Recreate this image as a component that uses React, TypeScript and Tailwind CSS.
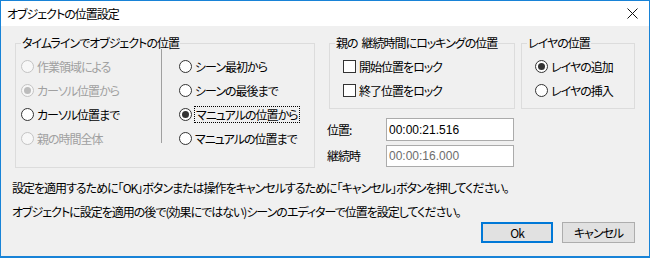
import React from 'react';

const font = "font-['Noto_Sans_CJK_JP','Noto_Sans',sans-serif] [font-feature-settings:'palt'] tracking-[-1px]";

type RadioProps = { label: string; checked?: boolean; disabled?: boolean; focused?: boolean };

const Radio: React.FC<RadioProps> = ({ label, checked, disabled, focused }) => (
  <div className="flex items-center h-6">
    <span
      className={
        'w-[13px] h-[13px] rounded-full border flex items-center justify-center shrink-0 ' +
        (disabled ? 'border-[#c4c4c4] bg-[#f7f7f7]' : 'border-[#333333] bg-white')
      }
    >
      {checked && (
        <span className={'w-[7px] h-[7px] rounded-full ' + (disabled ? 'bg-[#bcbcbc]' : 'bg-[#333333]')} />
      )}
    </span>
    <span
      className={
        'ml-[2px] leading-[15px] ' +
        (disabled ? 'text-[#a0a0a0] ' : 'text-black ') +
        (focused ? 'border border-dotted border-black px-[1px]' : 'border border-transparent')
      }
    >
      {label}
    </span>
  </div>
);

const Check: React.FC<{ label: string }> = ({ label }) => (
  <div className="flex items-center h-6">
    <span className="w-[13px] h-[13px] border border-[#333333] bg-white shrink-0" />
    <span className="ml-[3px] leading-[15px]">{label}</span>
  </div>
);

const Group: React.FC<{ title: React.ReactNode; className?: string; children: React.ReactNode }> = ({
  title,
  className,
  children,
}) => (
  <fieldset className={'border border-[#dcdcdc] p-0 m-0 ' + (className ?? '')}>
    <legend className="ml-[5px] px-[1px] leading-[16px] text-black">{title}</legend>
    {children}
  </fieldset>
);

export default function App() {
  return (
    <div className={`w-[650px] h-[258px] flex flex-col border border-[#1883d7] border-b-2 text-[12px] text-black ${font}`}>
      {/* Title bar */}
      <div className="h-[25px] bg-white flex items-center justify-between pl-[6px] pr-[11px] shrink-0">
        <span className="text-[12px] leading-[16px]">オブジェクトの位置設定</span>
        <svg width="11" height="11" viewBox="0 0 11 11">
          <path d="M0.5 0.5 L10.5 10.5 M10.5 0.5 L0.5 10.5" stroke="#111" strokeWidth="1" />
        </svg>
      </div>

      {/* Body */}
      <div className="flex-1 bg-[#f0f0f0] flex flex-col">
        <div className="flex items-start pt-[9px] pl-[14px] pr-[14px]">
          <Group title="タイムラインでオブジェクトの位置" className="w-[301px] h-[133px]">
            <div className="flex pt-[3px] pl-[5px]">
              <div className="w-[140px] flex flex-col">
                <Radio label="作業領域による" disabled />
                <Radio label="カーソル位置から" disabled checked />
                <Radio label="カーソル位置まで" />
                <Radio label="親の時間全体" disabled />
              </div>
              <div className="w-px h-[94px] bg-[#a0a0a0] mt-[-5px]" />
              <div className="flex flex-col pl-[17px]">
                <Radio label="シーン最初から" />
                <Radio label="シーンの最後まで" />
                <Radio label="マニュアルの位置から" checked focused />
                <Radio label="マニュアルの位置まで" />
              </div>
            </div>
          </Group>

          <div className="flex flex-col ml-[14px]">
            <div className="flex gap-[6px]">
              <Group
                title={
                  <>
                    親の<span className="ml-[4px]">継続時間にロッキングの位置</span>
                  </>
                }
                className="w-[186px] h-[74px]"
              >
                <div className="flex flex-col pt-[3px] pl-[13px]">
                  <Check label="開始位置をロック" />
                  <Check label="終了位置をロック" />
                </div>
              </Group>
              <Group title="レイヤの位置" className="w-[114px] h-[74px]">
                <div className="flex flex-col pt-[3px] pl-[13px]">
                  <Radio label="レイヤの追加" checked />
                  <Radio label="レイヤの挿入" />
                </div>
              </Group>
            </div>

            <div className="flex flex-col gap-[4px] mt-[9px] -ml-[2px]">
              <div className="flex items-center">
                <span className="w-[59px]">位置:</span>
                <div className="w-[128px] h-[23px] border border-[#ababab] bg-white flex items-center pl-[2px] font-['Liberation_Sans',sans-serif] text-[12px] tracking-normal">
                  00:00:21.516
                </div>
              </div>
              <div className="flex items-center">
                <span className="w-[59px]">継続時</span>
                <div className="w-[128px] h-[22px] border border-[#ababab] bg-white flex items-center pl-[2px] text-[#6d6d6d] font-['Liberation_Sans',sans-serif] text-[12px] tracking-normal">
                  00:00:16.000
                </div>
              </div>
            </div>
          </div>
        </div>

        {/* Message lines */}
        <div className="flex flex-col pl-[11px] mt-[12px]">
          <p className="leading-[16px] h-6">
            設定を適用するために「OK」ボタンまたは操作をキャンセルするために「キャンセル」ボタンを押してください。
          </p>
          <p className="leading-[16px]">
            オブジェクトに設定を適用の後で(効果にではない)シーンのエディターで位置を設定してください。
          </p>
        </div>

        {/* Buttons */}
        <div className="flex justify-end gap-[9px] pr-[14px] mt-[2px]">
          <button className="w-[72px] h-[21px] border-2 border-[#0078d7] bg-[#e1e1e1] leading-none">Ok</button>
          <button className="w-[73px] h-[21px] border border-[#adadad] bg-[#e1e1e1] leading-none">キャンセル</button>
        </div>
      </div>
    </div>
  );
}
